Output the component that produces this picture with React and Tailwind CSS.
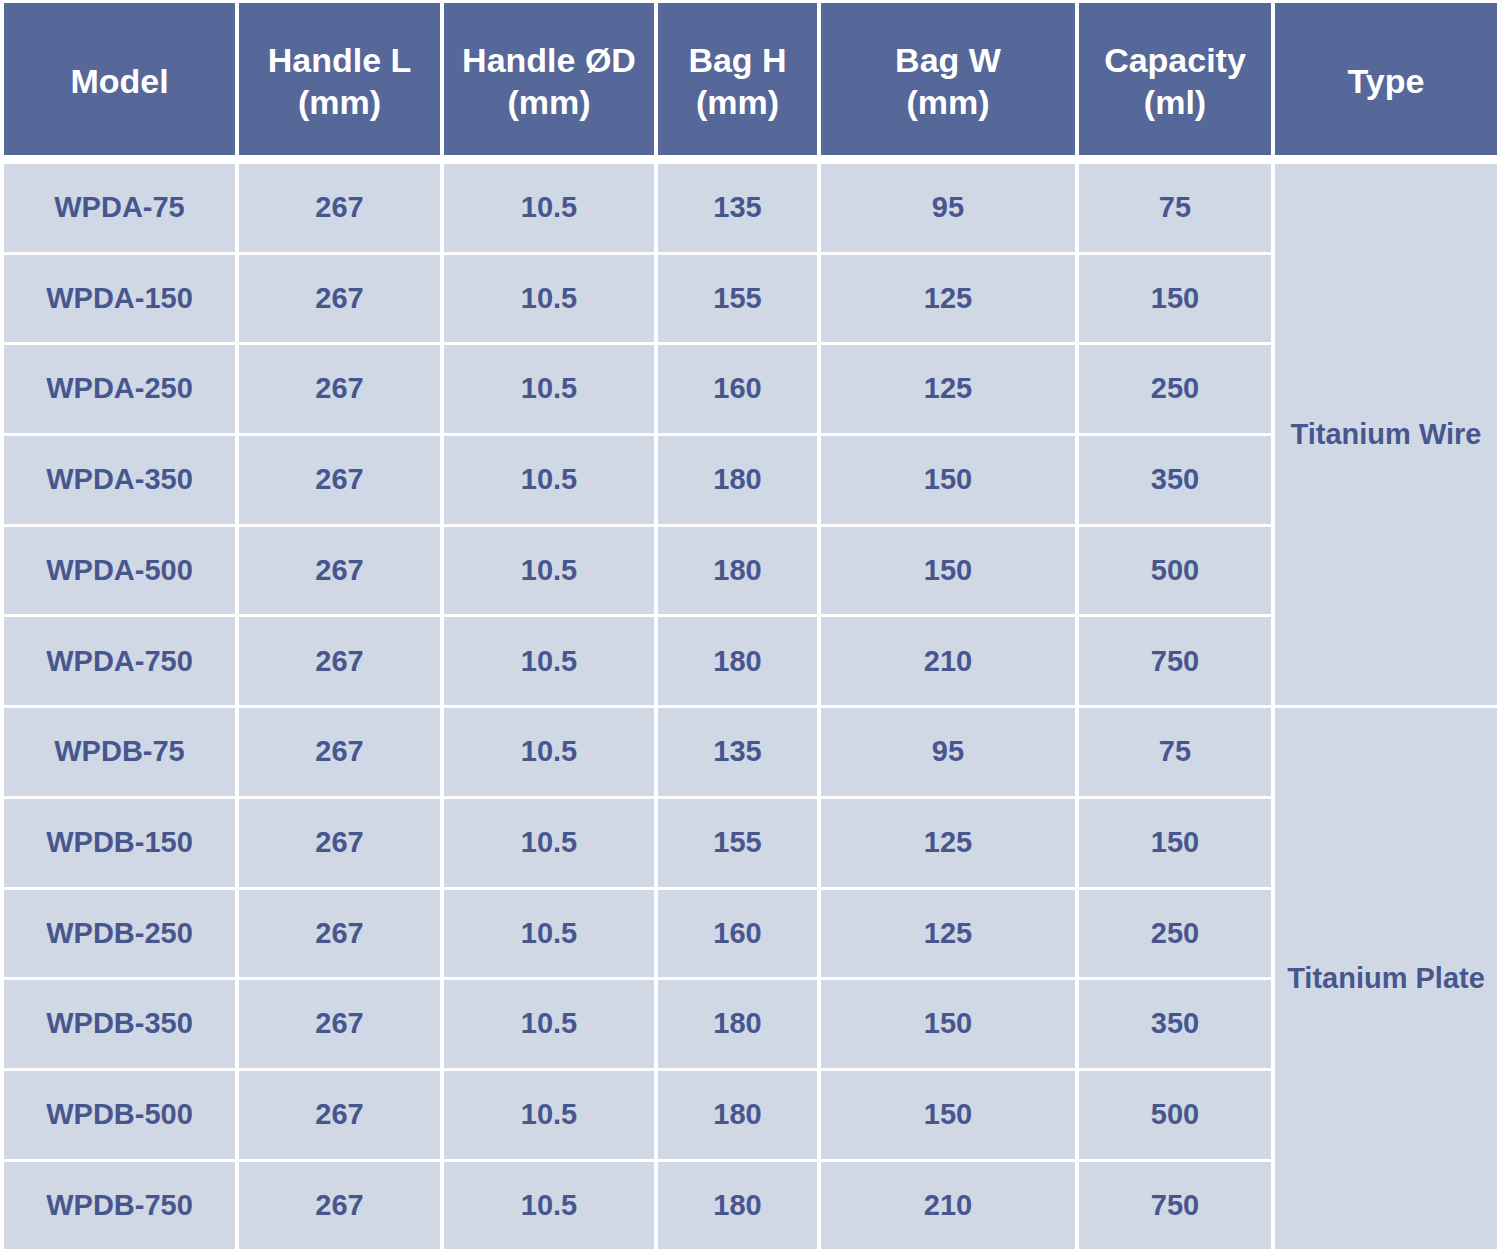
import React from "react";

const cols = "grid grid-cols-[231px_201px_210px_159px_254px_192px_222px] gap-x-[4px]";

const headers = [
  ["Model"],
  ["Handle L", "(mm)"],
  ["Handle ØD", "(mm)"],
  ["Bag H", "(mm)"],
  ["Bag W", "(mm)"],
  ["Capacity", "(ml)"],
  ["Type"],
];

const rows = [
  ["WPDA-75", "267", "10.5", "135", "95", "75"],
  ["WPDA-150", "267", "10.5", "155", "125", "150"],
  ["WPDA-250", "267", "10.5", "160", "125", "250"],
  ["WPDA-350", "267", "10.5", "180", "150", "350"],
  ["WPDA-500", "267", "10.5", "180", "150", "500"],
  ["WPDA-750", "267", "10.5", "180", "210", "750"],
  ["WPDB-75", "267", "10.5", "135", "95", "75"],
  ["WPDB-150", "267", "10.5", "155", "125", "150"],
  ["WPDB-250", "267", "10.5", "160", "125", "250"],
  ["WPDB-350", "267", "10.5", "180", "150", "350"],
  ["WPDB-500", "267", "10.5", "180", "150", "500"],
  ["WPDB-750", "267", "10.5", "180", "210", "750"],
];

export default function App() {
  return (
    <div className="min-h-screen bg-white pl-[4px] pt-[3px] font-['Liberation_Sans',Arial,sans-serif] font-bold">
      {/* Header */}
      <div className={cols}>
        {headers.map((h, i) => (
          <div
            key={i}
            className="h-[152px] pt-[3px] bg-[#56679a] flex flex-col items-center justify-center text-white text-[34px] leading-[42px]"
          >
            {h.map((line) => (
              <span key={line}>{line}</span>
            ))}
          </div>
        ))}
      </div>

      {/* Body */}
      <div className={`${cols} mt-[9px] gap-y-[3px] grid-rows-[repeat(12,87.7px)] text-[#47578e]`}>
        {rows.map((r, ri) =>
          r.map((c, ci) => (
            <div
              key={`${ri}-${ci}`}
              className="bg-[#d0d8e6] flex items-center justify-center text-[29px]"
              style={{ gridRow: ri + 1, gridColumn: ci + 1 }}
            >
              {c}
            </div>
          ))
        )}
        <div className="col-start-7 row-start-1 row-span-6 bg-[#d0d8e6] flex items-center justify-center text-[29px]">
          Titanium Wire
        </div>
        <div className="col-start-7 row-start-7 row-span-6 bg-[#d0d8e6] flex items-center justify-center text-[29px]">
          Titanium Plate
        </div>
      </div>
    </div>
  );
}
